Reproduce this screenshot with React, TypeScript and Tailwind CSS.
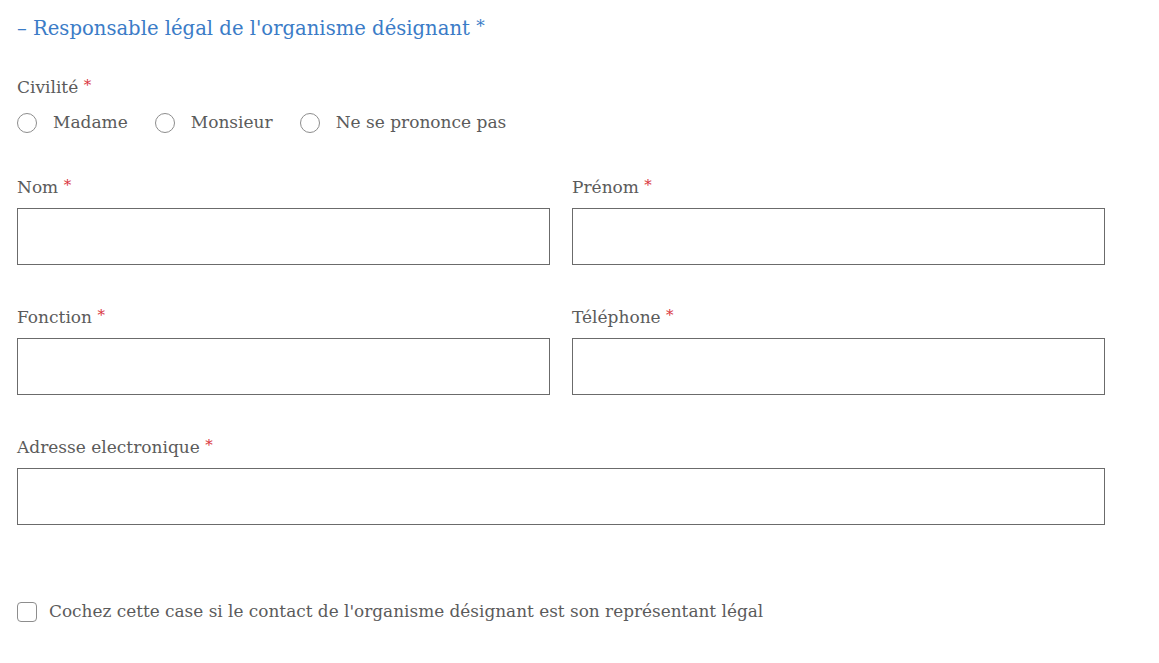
import React from "react";

const serif = { fontFamily: '"DejaVu Serif", "Liberation Serif", serif' };

function Label({ children }: { children: React.ReactNode }) {
  return (
    <label className="block h-[28px] text-[17px] leading-[28px] text-[#5b5b5b]">
      {children} <span className="relative -top-[3px] text-[15px] text-[#d9363e]">*</span>
    </label>
  );
}

function Field({ label }: { label: string }) {
  return (
    <div className="flex flex-col">
      <Label>{label}</Label>
      <input
        type="text"
        className="mt-[7px] h-[57px] w-full border border-[#6b6b6b] bg-white px-3 outline-none"
      />
    </div>
  );
}

function Radio({ label }: { label: string }) {
  return (
    <label className="flex items-center gap-[16px]">
      <span className="h-[20px] w-[20px] rounded-full border border-[#8d8d8d] bg-white" />
      <span>{label}</span>
    </label>
  );
}

export default function App() {
  return (
    <div className="min-h-[663px] bg-white" style={serif}>
      <div className="w-[1105px] pl-[17px] pt-[14px]">
        <h2 className="h-[30px] text-[19.6px] leading-[30px] text-[#3b7cc7]">
          – Responsable légal de l'organisme désignant{" "}
          <span className="relative -top-[3px] text-[17px]">*</span>
        </h2>

        <div className="mt-[29px]">
          <Label>Civilité</Label>
          <div className="mt-[8px] flex h-[28px] items-center gap-[27px] text-[17px] text-[#5b5b5b]">
            <Radio label="Madame" />
            <Radio label="Monsieur" />
            <Radio label="Ne se prononce pas" />
          </div>
        </div>

        <div className="mt-[36px] grid grid-cols-2 gap-x-[22px] gap-y-[38px]">
          <Field label="Nom" />
          <Field label="Prénom" />
          <Field label="Fonction" />
          <Field label="Téléphone" />
          <div className="col-span-2">
            <Field label="Adresse electronique" />
          </div>
        </div>

        <label className="mt-[74px] flex items-center gap-[12px] text-[16.9px] text-[#5b5b5b]">
          <span className="h-[20px] w-[20px] rounded-[4px] border border-[#8d8d8d] bg-white" />
          <span>Cochez cette case si le contact de l'organisme désignant est son représentant légal</span>
        </label>
      </div>
    </div>
  );
}
